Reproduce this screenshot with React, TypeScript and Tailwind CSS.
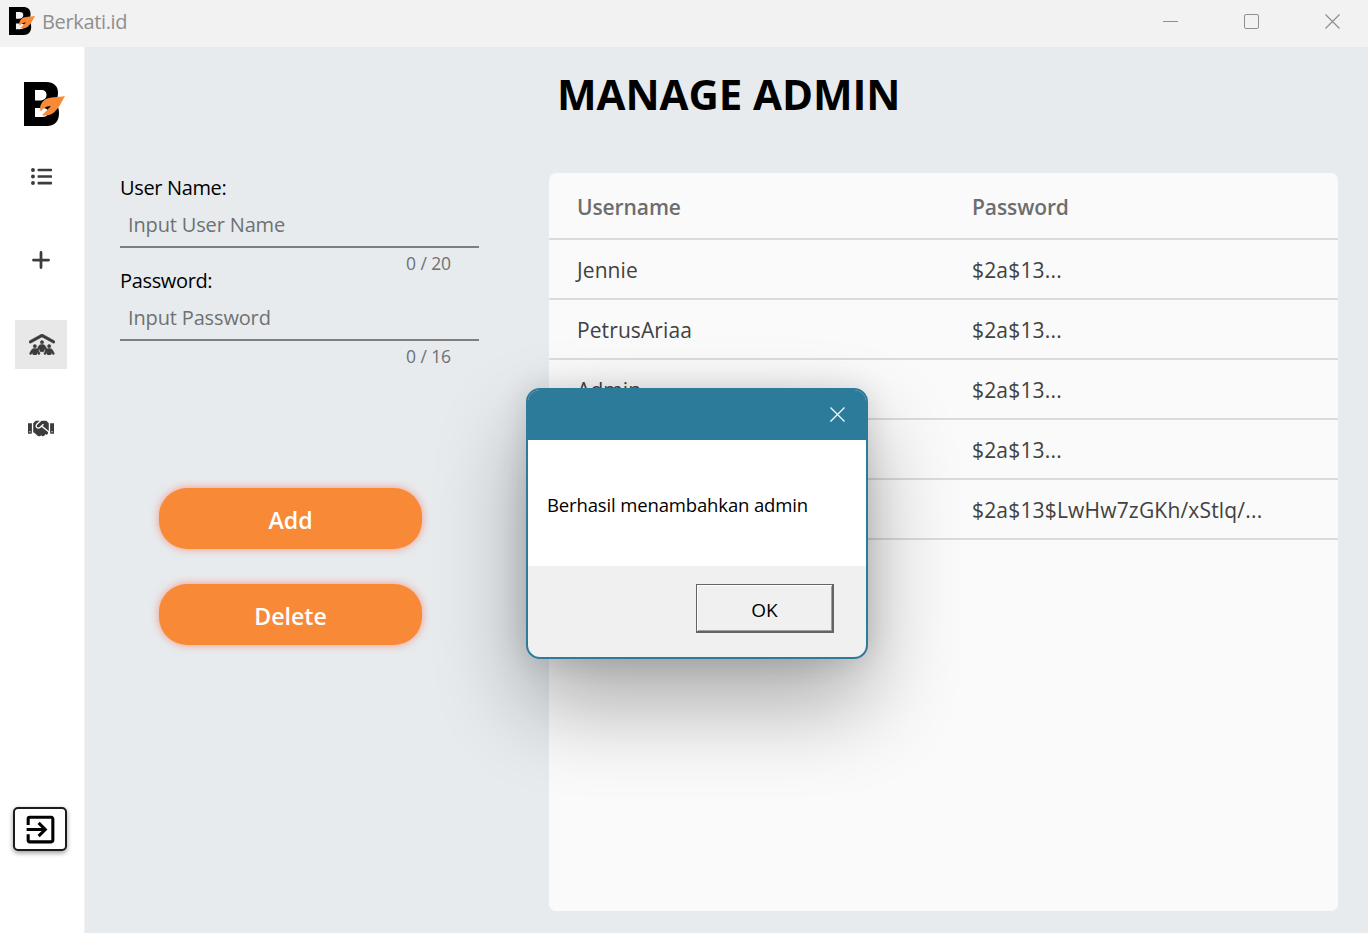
import type { ReactNode } from "react";
import { FaHandshake, FaListUl } from "react-icons/fa";
import { FaPeopleRoof, FaPlus } from "react-icons/fa6";
import { MdExitToApp } from "react-icons/md";

function Logo({ className }: { className: string }) {
  return (
    <svg viewBox="0 0 41 44" className={className}>
      <path
        fill="#000"
        fillRule="evenodd"
        d="M0 0H22C30 0 34 4 34 11C34 16 32 19 30 21C34 23 35 27 35 31C35 39 31 44 23 44H0ZM11 8V18.500H16C20 18.500 22.500 16 22.500 13C22.500 10 21 8 17 8ZM11 26V35H17C22 35 24 34 24 30C24 27 22 26 18 26Z"
      />
      <path
        fill="#f78937"
        d="M41 14C37 21 35 26 30 30.500C27 33 23 34 18 33.300C20 31 22 29.500 24.500 26.500L27 24.200C22 24 19.500 26 16.800 29.500C15 25 17 20.500 21 17.500C26 14.500 34 15.500 41 14Z"
      />
    </svg>
  );
}

function Cross({ className }: { className: string }) {
  return (
    <svg viewBox="0 0 16 16" fill="none" stroke="currentColor" strokeWidth="1.300" className={className}>
      <path d="M0.500 0.500L15.500 15.500M15.500 0.500L0.500 15.500" />
    </svg>
  );
}

function NavItem({ children, active = false }: { children: ReactNode; active?: boolean }) {
  return (
    <button
      className={
        active
          ? "flex h-[49px] w-[52px] items-center justify-center bg-[#e8e8e8] text-[#3c3c3c]"
          : "flex h-[49px] w-[52px] items-center justify-center text-[#3c3c3c]"
      }
    >
      {children}
    </button>
  );
}

function Field({ label, hint, count }: { label: string; hint: string; count: string }) {
  return (
    <div className="flex h-[93px] flex-col">
      <label className="h-7 text-[20px] leading-7 tracking-[-0.35px] text-black">{label}</label>
      <div className="flex h-[46px] items-center border-b-2 border-[#7c7e80] pt-[2px] pl-2 text-[20px] tracking-[-0.15px] text-[#6f7173]">
        {hint}
      </div>
      <div className="h-[18px] pt-[2px] pr-7 text-right text-[17.5px] leading-[26px] tracking-[-0.1px] text-[#6f7173]">
        {count}
      </div>
    </div>
  );
}

const rows = [
  { name: "Jennie", hash: "$2a$13..." },
  { name: "PetrusAriaa", hash: "$2a$13..." },
  { name: "Admin", hash: "$2a$13..." },
  { name: "", hash: "$2a$13..." },
  { name: "", hash: "$2a$13$LwHw7zGKh/xStlq/..." },
];

export default function App() {
  return (
    <div className="relative flex h-[933px] w-[1368px] flex-col overflow-hidden bg-[#e7ebee] font-['Open_Sans','Noto_Sans',sans-serif]">
      <header className="flex h-[47px] shrink-0 items-center justify-between bg-[#f2f2f2] pr-7 pl-[9px] text-[#8f8f8f]">
        <div className="flex items-center gap-[7px] pb-[5px]">
          <Logo className="h-7 w-[26px]" />
          <span className="pt-[2px] text-[20px] leading-7 tracking-[-0.35px]">Berkati.id</span>
        </div>
        <div className="flex items-center gap-[66px] pb-1">
          <span className="h-px w-[15px] bg-[#8f8f8f]" />
          <span className="size-[15px] rounded-[2px] border-[1.5px] border-[#8f8f8f]" />
          <Cross className="size-[15px]" />
        </div>
      </header>

      <div className="flex min-h-0 flex-1">
        <aside className="flex w-[85px] shrink-0 flex-col items-center border-r border-[#f0f2f4] bg-white pt-[35px] pr-[2px]">
          <Logo className="ml-[6px] h-11 w-[41px]" />
          <nav className="mt-[26px] flex flex-col gap-[35px]">
            <NavItem><FaListUl className="mb-px size-[21px]" /></NavItem>
            <NavItem><FaPlus className="mb-[2px] size-[22px]" /></NavItem>
            <NavItem active><FaPeopleRoof className="ml-px h-[21px] w-[26px] stroke-current stroke-[14px]" /></NavItem>
            <NavItem><FaHandshake className="mb-px h-[21px] w-[26px]" /></NavItem>
          </nav>
          <button className="mt-[354px] mr-[2px] flex h-[44px] w-[54px] items-center justify-center rounded-[5px] border-2 border-[#1c1c1e] bg-white text-black shadow-[0_2px_5px_rgba(0,0,0,0.4)]">
            <MdExitToApp className="size-[37px] shrink-0" />
          </button>
        </aside>

        <main className="flex min-w-0 flex-1 flex-col pr-[30px] pl-[35px]">
          <h1 className="ml-[437px] h-[126px] pt-[17px] text-[42px] leading-[60px] font-bold tracking-[-0.08px] whitespace-nowrap text-black">
            MANAGE ADMIN
          </h1>
          <div className="flex">
            <section className="w-[359px]">
              <div className="pt-px">
                <Field label="User Name:" hint="Input User Name" count="0 / 20" />
                <Field label="Password:" hint="Input Password" count="0 / 16" />
              </div>
              <div className="mt-[128px] ml-[39px] flex flex-col gap-[35px]">
                {["Add", "Delete"].map((text) => (
                  <button
                    key={text}
                    className="h-[61px] w-[263px] rounded-[28px] bg-[#f78937] pt-[3px] text-[23.2px] font-semibold text-white shadow-[0_0_9px_rgba(255,70,30,0.5)]"
                  >
                    {text}
                  </button>
                ))}
              </div>
            </section>

            <section className="ml-[70px] h-[738px] w-[789px] overflow-hidden rounded-[7px] bg-[#fafafa]">
              <div className="grid h-[67px] grid-cols-[395px_1fr] items-center border-b-2 border-[#dbdbdb] pt-1 pl-7 text-[21px] font-semibold tracking-[-0.1px] text-[#6d6d6d]">
                <span>Username</span>
                <span>Password</span>
              </div>
              {rows.map((row, i) => (
                <div
                  key={i}
                  className="grid h-[60px] grid-cols-[395px_1fr] items-center border-b-2 border-[#dbdbdb] pt-1 pl-7 text-[21px] text-[#414141]"
                >
                  <span className="tracking-[0.1px]">{row.name}</span>
                  <span className="tracking-[0.18px]">{row.hash}</span>
                </div>
              ))}
            </section>
          </div>
        </main>
      </div>

      <div
        role="dialog"
        className="absolute top-[388px] left-[526px] flex h-[271px] w-[342px] flex-col overflow-hidden rounded-[14px] border-2 border-[#2d7b9a] bg-[#f0f0f0] shadow-[0_44px_90px_rgba(0,0,0,0.33),0_0_30px_rgba(0,0,0,0.13)]"
      >
        <div className="flex h-[50px] items-center justify-end bg-[#2d7b9a] pr-[21px] pb-[2px] text-white">
          <Cross className="size-[15px]" />
        </div>
        <div className="flex h-[126px] items-center bg-white pt-[4px] pl-[19px] text-[18.5px] tracking-[-0.14px] text-black">
          Berhasil menambahkan admin
        </div>
        <div className="flex flex-1 justify-end pt-[18px] pr-8">
          <button className="h-[49px] w-[138px] border border-r-2 border-b-2 border-[#646464] pt-[4px] text-[19px] text-black shadow-[inset_1px_1px_0_#fff,inset_-1px_-1px_0_#a0a0a0]">
            OK
          </button>
        </div>
      </div>
    </div>
  );
}
